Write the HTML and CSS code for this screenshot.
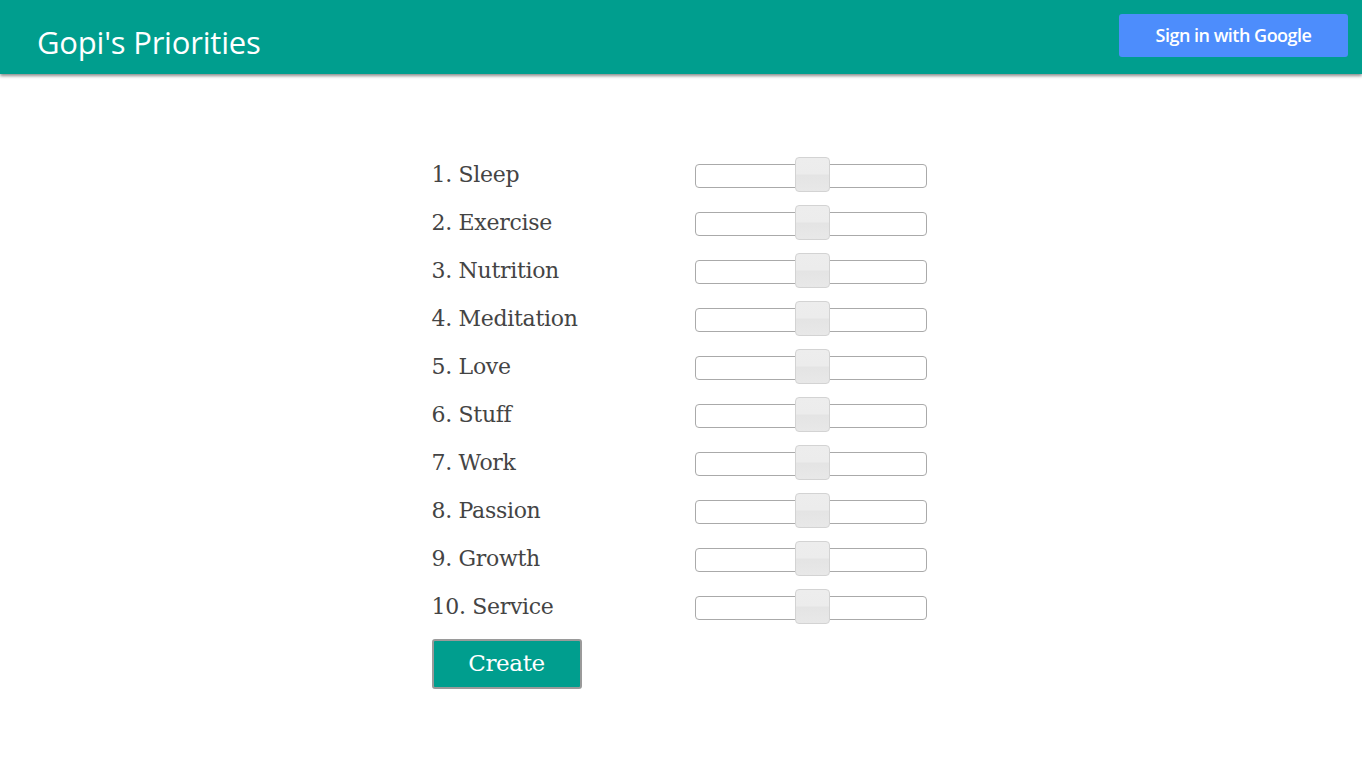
FILE: index.html
```html
<!DOCTYPE html>
<html>
<head>
<meta charset="utf-8">
<title>Gopi's Priorities</title>
<link rel="stylesheet" href="styles.css">
</head>
<body>
<header class="topbar">
  <h1 class="brand">Gopi's Priorities</h1>
  <button class="signin">Sign in with Google</button>
</header>
<main class="content">
  <div class="list">
    <div class="row"><span class="label">1. Sleep</span><div class="track"><span class="handle"></span></div></div>
    <div class="row"><span class="label">2. Exercise</span><div class="track"><span class="handle"></span></div></div>
    <div class="row"><span class="label">3. Nutrition</span><div class="track"><span class="handle"></span></div></div>
    <div class="row"><span class="label">4. Meditation</span><div class="track"><span class="handle"></span></div></div>
    <div class="row"><span class="label">5. Love</span><div class="track"><span class="handle"></span></div></div>
    <div class="row"><span class="label">6. Stuff</span><div class="track"><span class="handle"></span></div></div>
    <div class="row"><span class="label">7. Work</span><div class="track"><span class="handle"></span></div></div>
    <div class="row"><span class="label">8. Passion</span><div class="track"><span class="handle"></span></div></div>
    <div class="row"><span class="label">9. Growth</span><div class="track"><span class="handle"></span></div></div>
    <div class="row"><span class="label">10. Service</span><div class="track"><span class="handle"></span></div></div>
    <button class="create">Create</button>
  </div>
</main>
</body>
</html>
```
FILE: styles.css
```css
html, body {
  margin: 0;
  padding: 0;
  background: #ffffff;
}
body {
  font-family: "Liberation Serif", "DejaVu Serif", serif;
}
.topbar {
  height: 74px;
  background: #009e8e;
  box-shadow: 0 2px 3px rgba(0,0,0,0.45);
  display: flex;
  align-items: center;
  justify-content: space-between;
  padding: 0 14px 0 37px;
  box-sizing: border-box;
  position: relative;
}
.brand {
  margin: 10px 0 0 0;
  font-family: "Open Sans", "Noto Sans", sans-serif;
  font-weight: 400;
  font-size: 31px;
  color: #ffffff;
  letter-spacing: -0.2px;
}
.signin {
  width: 229px;
  height: 43px;
  margin-top: -4px;
  border: none;
  border-radius: 3px;
  background: #4d8dfc;
  color: #ffffff;
  font-family: "Open Sans", "Noto Sans", sans-serif;
  font-size: 18px;
  font-weight: 600;
  letter-spacing: -0.5px;
}
.content {
  padding-top: 78px;
  display: flex;
  justify-content: center;
}
.list {
  width: 496px;
  margin-left: -3px;
  display: flex;
  flex-direction: column;
}
.row {
  height: 48px;
  display: flex;
  align-items: center;
}
.label {
  width: 263px;
  font-family: "DejaVu Serif", "Liberation Serif", serif;
  font-size: 22px;
  color: #444444;
  letter-spacing: -0.3px;
  margin-top: -4px;
}
.track {
  position: relative;
  width: 230px;
  height: 22px;
  border: 1px solid #aaaaaa;
  border-radius: 4px;
  background: #ffffff;
}
.handle {
  position: absolute;
  left: 99px;
  top: -8px;
  width: 33px;
  height: 33px;
  border: 1px solid #d3d3d3;
  border-radius: 4px;
  background: linear-gradient(to bottom, #ededed 0%, #ececec 48%, #e4e4e4 52%, #e8e8e8 100%);
}
.create {
  margin-top: 7px;
  width: 150px;
  height: 50px;
  background: #009e8e;
  border: 2px solid #9a9a9a;
  border-radius: 3px;
  color: #ffffff;
  font-family: "DejaVu Serif", "Liberation Serif", serif;
  font-size: 23px;
  letter-spacing: -0.4px;
  padding: 0 0 2px 0;
}
```
